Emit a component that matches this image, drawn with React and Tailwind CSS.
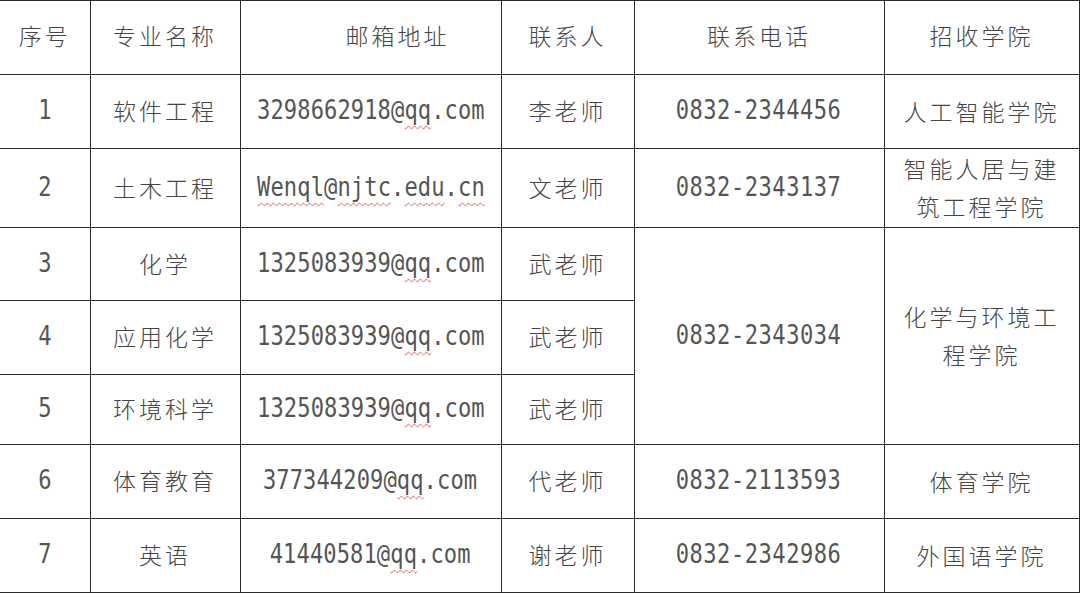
const rows = [
  { no: "1", major: "软件工程", email: ["3298662918@", "qq", ".com"], contact: "李老师", phone: "0832-2344456", college: ["人工智能学院"], h: "h-[74px]" },
  { no: "2", major: "土木工程", email: null, contact: "文老师", phone: "0832-2343137", college: ["智能人居与建", "筑工程学院"], h: "h-[79px]" },
  { no: "3", major: "化学", email: ["1325083939@", "qq", ".com"], contact: "武老师", phone: "0832-2343034", college: ["化学与环境工", "程学院"], span: 3, h: "h-[73px]" },
  { no: "4", major: "应用化学", email: ["1325083939@", "qq", ".com"], contact: "武老师", skip: true, h: "h-[74px]" },
  { no: "5", major: "环境科学", email: ["1325083939@", "qq", ".com"], contact: "武老师", skip: true, h: "h-[70px]" },
  { no: "6", major: "体育教育", email: ["377344209@", "qq", ".com"], contact: "代老师", phone: "0832-2113593", college: ["体育学院"], h: "h-[74px]" },
  { no: "7", major: "英语", email: ["41440581@", "qq", ".com"], contact: "谢老师", phone: "0832-2342986", college: ["外国语学院"], h: "h-[74px]" },
];

const cjk = "font-['Noto_Sans_CJK_SC',sans-serif] font-light text-[23px] tracking-[3px]";
const wavy = "underline decoration-wavy decoration-[#e05050] decoration-1 underline-offset-[6px]";
const cell = "border border-[#2a2a2a] text-center align-middle p-0";

// narrow, tall digits like the source document's font
function Num({ children, wide }) {
  return (
    <div className="flex justify-center">
      <span
        className={`inline-block whitespace-nowrap scale-x-[0.85] font-['DejaVu_Sans_Mono',monospace] text-[26px] text-[#555] ${
          wide ? "tracking-[0.6px]" : "tracking-[0.1px]"
        }`}
      >
        {children}
      </span>
    </div>
  );
}

function Email({ parts }) {
  if (!parts) {
    return (
      <Num>
        <span className={wavy}>Wenql</span>@<span className={wavy}>njtc</span>.<span className={wavy}>edu</span>.<span className={wavy}>cn</span>
      </Num>
    );
  }
  return (
    <Num>
      {parts[0]}
      <span className={wavy}>{parts[1]}</span>
      {parts[2]}
    </Num>
  );
}

export default function App() {
  return (
    <div className="w-[1080px] h-[593px] bg-white overflow-hidden text-[#454545]">
      <table className="table-fixed border-collapse w-[1079px]">
        <colgroup>
          <col className="w-[90px]" />
          <col className="w-[150px]" />
          <col className="w-[261px]" />
          <col className="w-[133px]" />
          <col className="w-[250px]" />
          <col className="w-[195px]" />
        </colgroup>
        <thead>
          <tr className="h-[74px]">
            <th className={`${cell} border-l-0 ${cjk} pb-[4px]`}>序号</th>
            <th className={`${cell} ${cjk} pb-[4px]`}>专业名称</th>
            <th className={`${cell} ${cjk} pl-[54px] pb-[4px]`}>邮箱地址</th>
            <th className={`${cell} ${cjk} pb-[4px]`}>联系人</th>
            <th className={`${cell} ${cjk} pb-[4px]`}>联系电话</th>
            <th className={`${cell} ${cjk} pb-[4px]`}>招收学院</th>
          </tr>
        </thead>
        <tbody>
          {rows.map((r) => (
            <tr key={r.no} className={r.h}>
              <td className={`${cell} border-l-0 pb-[2px]`}>
                <Num>{r.no}</Num>
              </td>
              <td className={`${cell} ${cjk} pb-[2px]`}>{r.major}</td>
              <td className={`${cell} pb-[2px]`}>
                <Email parts={r.email} />
              </td>
              <td className={`${cell} ${cjk} pb-[2px]`}>{r.contact}</td>
              {!r.skip && (
                <td rowSpan={r.span || 1} className={`${cell} pb-[2px]`}>
                  <Num wide>{r.phone}</Num>
                </td>
              )}
              {!r.skip && (
                <td rowSpan={r.span || 1} className={`${cell} ${cjk} leading-[38px] pb-[2px]`}>
                  {r.college.map((c) => (
                    <div key={c}>{c}</div>
                  ))}
                </td>
              )}
            </tr>
          ))}
        </tbody>
      </table>
    </div>
  );
}
